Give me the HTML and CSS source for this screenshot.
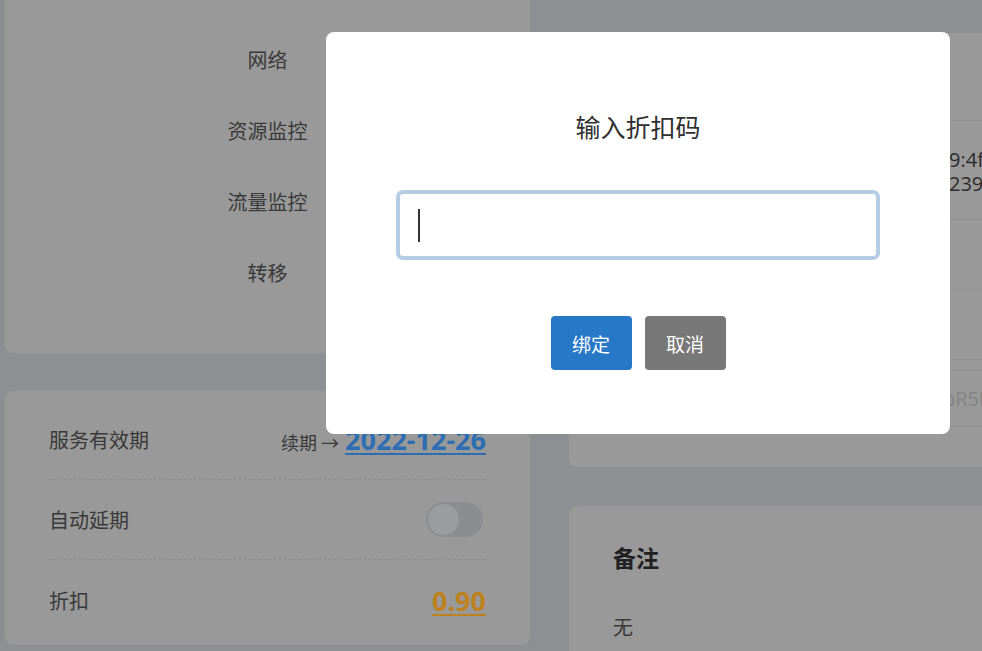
FILE: index.html
```html
<!DOCTYPE html>
<html lang="zh-CN">
<head>
<meta charset="utf-8">
<title>输入折扣码</title>
<link rel="stylesheet" href="styles.css">
</head>
<body>
<div class="page">
  <div class="col-left">
    <section class="card menu-card">
      <div class="menu-item">网络</div>
      <div class="menu-item">资源监控</div>
      <div class="menu-item">流量监控</div>
      <div class="menu-item">转移</div>
    </section>
    <section class="card info-card">
      <div class="info-row">
        <span class="info-label">服务有效期</span>
        <span class="info-value"><span class="renew">续期 →</span> <a class="date-link" href="#">2022-12-26</a></span>
      </div>
      <div class="info-row">
        <span class="info-label">自动延期</span>
        <span class="switch"><span class="switch-knob"></span></span>
      </div>
      <div class="info-row">
        <span class="info-label">折扣</span>
        <a class="discount-link" href="#">0.90</a>
      </div>
    </section>
  </div>
  <div class="col-right">
    <section class="card detail-card">
      <div class="detail-head">网络信息</div>
      <div class="detail-row tall">
        <span class="detail-label">MAC / IPv6</span>
        <span class="detail-value">9:4f:5e:21:0a<br>2390:6ab1::8</span>
      </div>
      <div class="detail-row">
        <span class="detail-label">IPv4</span>
        <span class="detail-value"></span>
      </div>
      <div class="detail-row">
        <span class="detail-label">网关</span>
        <span class="detail-value"></span>
      </div>
      <div class="detail-row last">
        <span class="detail-label">密码</span>
        <span class="detail-field">bR5F2kQ9xW</span>
      </div>
    </section>
    <section class="card note-card">
      <h2 class="note-title">备注</h2>
      <p class="note-text">无</p>
    </section>
  </div>
</div>

<div class="mask">
  <div class="dialog">
    <h3 class="dialog-title">输入折扣码</h3>
    <div class="dialog-input"><span class="caret"></span></div>
    <div class="dialog-actions">
      <button class="btn btn-primary">绑定</button>
      <button class="btn btn-cancel">取消</button>
    </div>
  </div>
</div>
</body>
</html>
```

FILE: styles.css
```css
html, body {
  margin: 0;
  padding: 0;
}
body {
  width: 982px;
  height: 651px;
  overflow: hidden;
  background: #bdbfc5;
  font-family: "Noto Sans CJK SC", "Open Sans", sans-serif;
  color: #4d4d4d;
  position: relative;
}
.page {
  display: flex;
  gap: 39px;
  padding-left: 5px;
  margin-top: -20px;
}
.col-left {
  width: 525px;
  flex-shrink: 0;
  display: flex;
  flex-direction: column;
  gap: 38px;
}
.col-right {
  width: 520px;
  flex-shrink: 0;
  display: flex;
  flex-direction: column;
  gap: 39px;
  margin-top: 53px;
}
.card {
  background: #cccccc;
  border-radius: 8px;
}
.menu-card {
  padding: 44px 0 45px;
}
.menu-item {
  height: 71px;
  display: flex;
  align-items: center;
  justify-content: center;
  font-size: 20px;
}
.info-card {
  padding: 9px 44px 5px;
}
.info-row {
  height: 80px;
  display: flex;
  align-items: center;
  justify-content: space-between;
  border-bottom: 1px dashed #bdbdbd;
  box-sizing: border-box;
}
.info-row:last-child {
  border-bottom: none;
}
.info-label {
  font-size: 20px;
}
.info-value {
  display: flex;
  align-items: center;
  gap: 6px;
}
.renew {
  font-size: 18px;
  margin-top: 4px;
}
.date-link,
.discount-link {
  font-family: "Open Sans", sans-serif;
  font-weight: 700;
  font-size: 27px;
  line-height: 1;
  text-decoration: underline;
  text-decoration-thickness: 2px;
  text-underline-offset: 3px;
}
.date-link {
  color: #3d93ee;
}
.discount-link {
  color: #fdad28;
}
.switch {
  width: 57px;
  height: 35px;
  margin-right: 3px;
  border-radius: 18px;
  background: #bbbcc2;
  display: flex;
  align-items: center;
  padding: 0 2px;
  box-sizing: border-box;
}
.switch-knob {
  width: 31px;
  height: 31px;
  border-radius: 50%;
  background: #cfd0d3;
}
.detail-card {
  height: 434px;
  padding: 0 44px;
  box-sizing: border-box;
}
.detail-head {
  height: 88px;
  display: flex;
  align-items: center;
  font-size: 22px;
  font-weight: 700;
  border-bottom: 1px solid #c0c0c0;
  box-sizing: border-box;
}
.detail-row {
  height: 70px;
  display: flex;
  align-items: center;
  border-bottom: 1px solid #c0c0c0;
  box-sizing: border-box;
}
.detail-row.tall {
  height: 99px;
}
.detail-row.last {
  border-bottom: none;
  height: 87px;
  align-items: flex-start;
  padding-top: 10px;
}
.detail-label {
  width: 320px;
  flex-shrink: 0;
  font-size: 18px;
}
.detail-value {
  font-family: "Open Sans", sans-serif;
  font-size: 20px;
  line-height: 24px;
  color: #3a3a3a;
  white-space: nowrap;
  margin-left: 16px;
  padding-top: 4px;
}
.detail-field {
  flex: 1;
  height: 57px;
  border-top: 1px solid #bfbfbf;
  border-bottom: 1px solid #bfbfbf;
  box-sizing: border-box;
  display: flex;
  align-items: center;
  padding-left: 10px;
  font-family: "Open Sans", sans-serif;
  font-size: 20px;
  color: #b0b0b0;
  white-space: nowrap;
}
.note-card {
  height: 200px;
  padding: 28px 44px;
  box-sizing: border-box;
}
.note-title {
  margin: 0;
  font-size: 23px;
  font-weight: 700;
  color: #2c2c30;
  line-height: 46px;
}
.note-text {
  margin: 32px 0 0;
  font-size: 20px;
  line-height: 30px;
}
.mask {
  position: absolute;
  inset: 0;
  background: rgba(0, 0, 0, 0.25);
}
.dialog {
  position: absolute;
  left: 326px;
  top: 32px;
  width: 624px;
  box-sizing: border-box;
  padding: 75px 70px 64px;
  background: #ffffff;
  border-radius: 8px;
}
.dialog-title {
  margin: 0;
  font-size: 25px;
  font-weight: 400;
  line-height: 38px;
  text-align: center;
  color: #2f2f2f;
}
.dialog-input {
  margin-top: 45px;
  height: 70px;
  border: 4px solid #b4cde3;
  border-radius: 7px;
  box-sizing: border-box;
  display: flex;
  align-items: center;
  padding-left: 18px;
}
.caret {
  width: 2px;
  height: 33px;
  background: #333333;
}
.dialog-actions {
  margin-top: 56px;
  display: flex;
  justify-content: center;
  gap: 13px;
}
.btn {
  width: 81px;
  height: 54px;
  border: none;
  border-radius: 4px;
  color: #ffffff;
  font-family: "Noto Sans CJK SC", sans-serif;
  font-size: 19px;
  padding: 0;
}
.btn-primary {
  background: #2878c8;
}
.btn-cancel {
  background: #787878;
}
```
